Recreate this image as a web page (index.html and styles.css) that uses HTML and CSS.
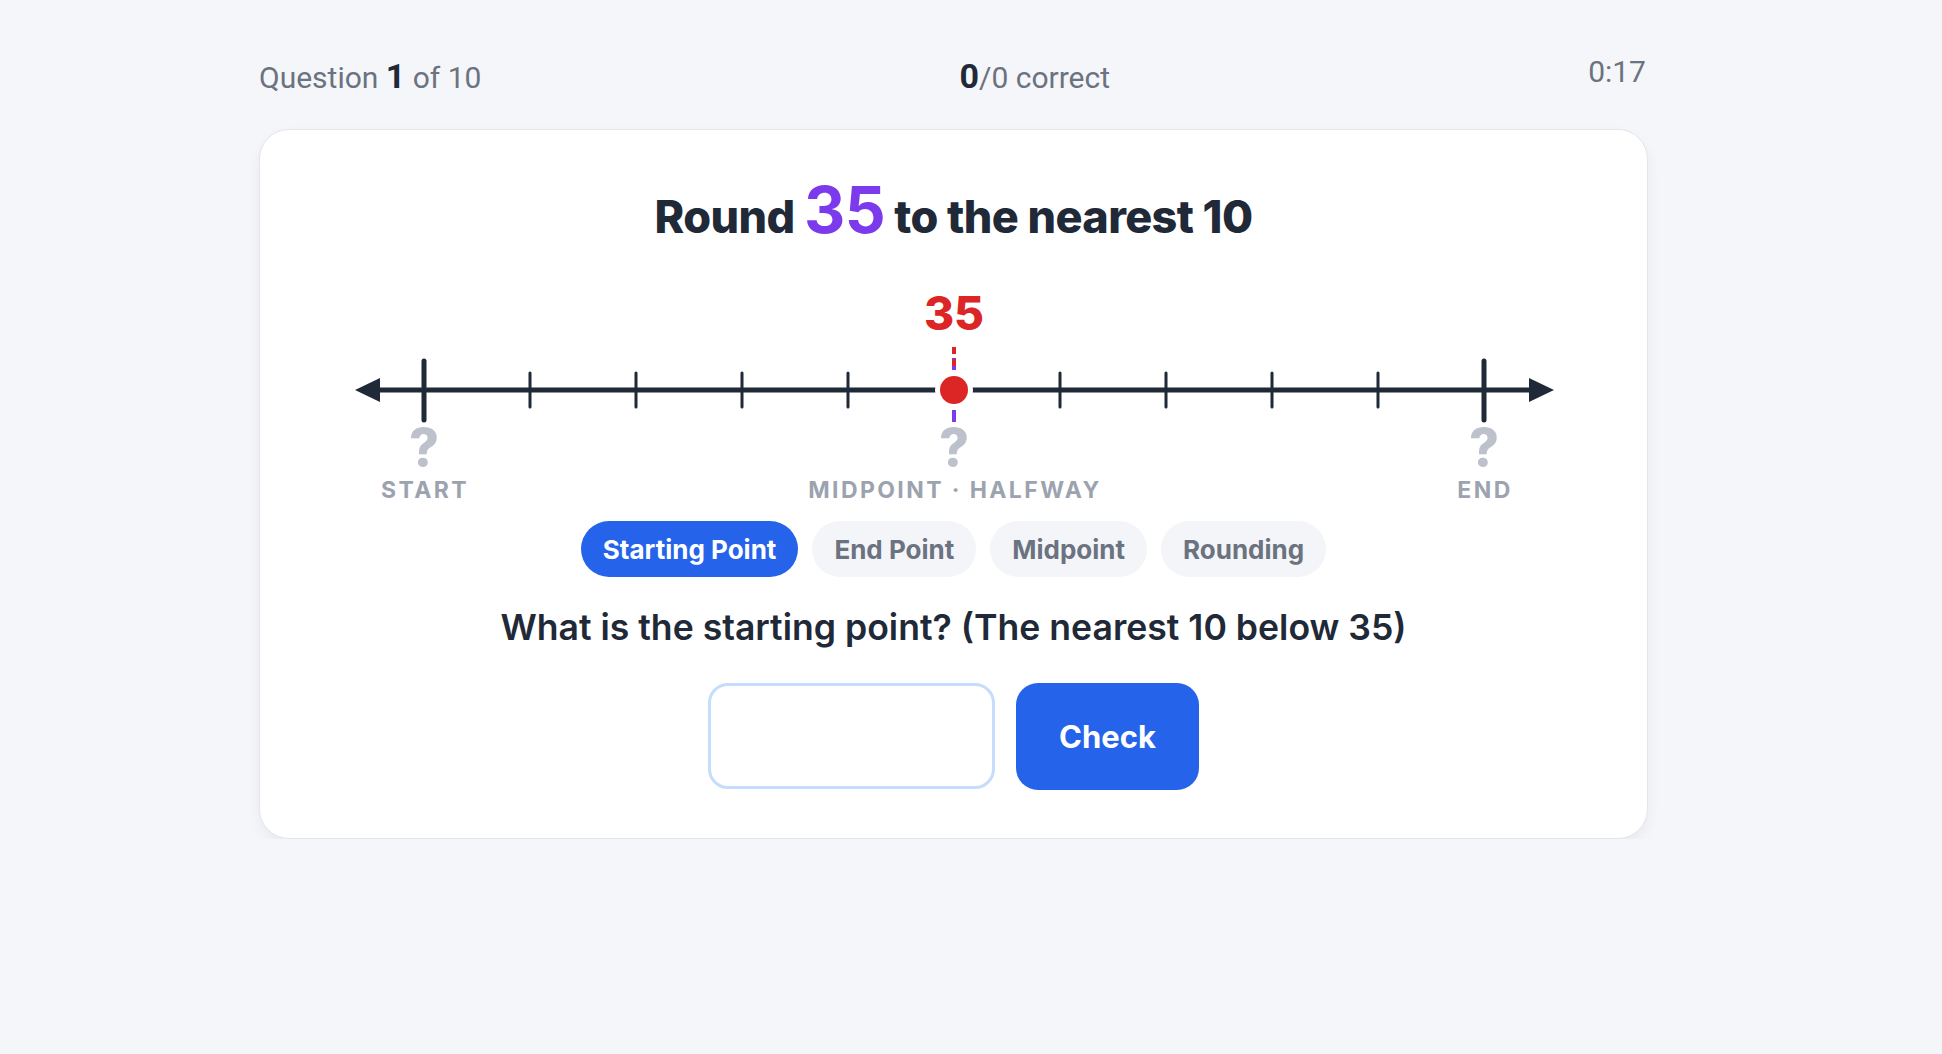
FILE: index.html
```html
<!DOCTYPE html>
<html lang="en">
<head>
<meta charset="utf-8">
<title>Rounding Practice</title>
<link rel="stylesheet" href="styles.css">
</head>
<body>
<main class="app">
  <header class="status">
    <div class="stat">Question <strong>1</strong> of 10</div>
    <div class="stat"><strong>0</strong>/0 correct</div>
    <div class="timer">0:17</div>
  </header>

  <section class="card">
    <h1 class="title">Round <span class="target">35</span> to the nearest 10</h1>

    <svg class="numberline" viewBox="0 0 1240 220" width="1240" height="220" aria-label="Number line">
      <!-- axis with arrows -->
      <line class="axis" x1="44" y1="100" x2="1196" y2="100"/>
      <polygon class="axis-head" points="21,100 46,88 46,112"/>
      <polygon class="axis-head" points="1220,100 1195,88 1195,112"/>

      <!-- end ticks -->
      <line class="tick-major" x1="90" y1="71" x2="90" y2="130"/>
      <line class="tick-major" x1="1150" y1="71" x2="1150" y2="130"/>

      <!-- unit ticks -->
      <line class="tick" x1="196" y1="83" x2="196" y2="117"/>
      <line class="tick" x1="302" y1="83" x2="302" y2="117"/>
      <line class="tick" x1="408" y1="83" x2="408" y2="117"/>
      <line class="tick" x1="514" y1="83" x2="514" y2="117"/>
      <line class="tick" x1="726" y1="83" x2="726" y2="117"/>
      <line class="tick" x1="832" y1="83" x2="832" y2="117"/>
      <line class="tick" x1="938" y1="83" x2="938" y2="117"/>
      <line class="tick" x1="1044" y1="83" x2="1044" y2="117"/>

      <!-- midpoint guide and value marker -->
      <line class="mid-guide" x1="620" y1="68" x2="620" y2="132"/>
      <line class="value-guide" x1="620" y1="57" x2="620" y2="90"/>
      <circle class="value-halo" cx="620" cy="100" r="19"/>
      <circle class="value-dot" cx="620" cy="100" r="14"/>
      <text class="value-label" x="620" y="40">35</text>

      <!-- unknown points -->
      <text class="unknown" x="90" y="176">?</text>
      <text class="unknown" x="620" y="176">?</text>
      <text class="unknown" x="1150" y="176">?</text>

      <text class="point-label" x="91" y="208">START</text>
      <text class="point-label" x="621" y="208">MIDPOINT · HALFWAY</text>
      <text class="point-label" x="1151" y="208">END</text>
    </svg>

    <nav class="steps">
      <button class="step is-active" type="button">Starting Point</button>
      <button class="step" type="button">End Point</button>
      <button class="step" type="button">Midpoint</button>
      <button class="step" type="button">Rounding</button>
    </nav>

    <p class="prompt">What is the starting point? (The nearest 10 below 35)</p>

    <form class="answer">
      <input class="answer-input" type="text" inputmode="numeric" aria-label="Answer">
      <button class="check" type="button">Check</button>
    </form>
  </section>
</main>
</body>
</html>
```

FILE: styles.css
```css
* {
  box-sizing: border-box;
}

html,
body {
  margin: 0;
  background: #f5f6fa;
}

body {
  padding: 56px 35px 0 0;
  font-family: Inter, "Noto Sans", sans-serif;
  color: #1f2937;
}

.app {
  width: 1389px;
  margin: 0 auto;
}

/* top status bar */
.status {
  display: flex;
  justify-content: space-between;
  align-items: flex-start;
  font-family: Roboto, "Liberation Sans", sans-serif;
  font-size: 30px;
  color: #6b7280;
  margin-bottom: 31px;
}

.stat {
  line-height: 40px;
}

.stat strong {
  font-size: 34px;
  font-weight: 700;
  color: #1f2937;
}

.timer {
  line-height: 32px;
  padding-right: 2px;
}

/* question card */
.card {
  background: #ffffff;
  border: 1px solid #e3e5ea;
  border-radius: 30px;
  box-shadow: 0 6px 14px rgba(15, 23, 42, 0.05);
  padding: 44px 48px 48px;
  display: flex;
  flex-direction: column;
  align-items: center;
}

.title {
  margin: 0;
  font-size: 45px;
  line-height: 72px;
  font-weight: 800;
  letter-spacing: -0.6px;
  color: #1f2937;
}

.target {
  font-size: 64px;
  line-height: 72px;
  font-weight: 700;
  color: #7c3aed;
  letter-spacing: -0.5px;
}

/* number line */
.numberline {
  display: block;
  margin-top: 37px;
  overflow: visible;
}

.axis {
  stroke: #1f2937;
  stroke-width: 5;
}

.axis-head {
  fill: #1f2937;
}

.tick-major {
  stroke: #1f2937;
  stroke-width: 5;
  stroke-linecap: round;
}

.tick {
  stroke: #1f2937;
  stroke-width: 3;
  stroke-linecap: round;
}

.mid-guide {
  stroke: #7c3aed;
  stroke-width: 4;
  stroke-dasharray: 12 14;
}

.value-guide {
  stroke: #dc2626;
  stroke-width: 4;
  stroke-dasharray: 7 5;
}

.value-halo {
  fill: #ffffff;
}

.value-dot {
  fill: #dc2626;
}

.value-label {
  font-family: Inter, sans-serif;
  font-size: 46px;
  font-weight: 800;
  fill: #dc2626;
  text-anchor: middle;
}

.unknown {
  font-family: Inter, sans-serif;
  font-size: 52px;
  font-weight: 800;
  fill: #bcc1cb;
  text-anchor: middle;
}

.point-label {
  font-family: Inter, sans-serif;
  font-size: 23px;
  font-weight: 700;
  letter-spacing: 2.4px;
  fill: #9ca3af;
  text-anchor: middle;
}

/* step tabs */
.steps {
  display: flex;
  gap: 14px;
  margin-top: 11px;
}

.step {
  height: 56px;
  padding: 0 22px;
  border: none;
  border-radius: 28px;
  background: #f4f5f8;
  color: #6b7280;
  font-family: Inter, sans-serif;
  font-size: 26px;
  font-weight: 700;
}

.step.is-active {
  background: #2563eb;
  color: #ffffff;
}

.prompt {
  margin: 29px 0 0;
  font-size: 35.6px;
  line-height: 44px;
  font-weight: 600;
  color: #1f2937;
}

/* answer row */
.answer {
  display: flex;
  gap: 21px;
  margin-top: 33px;
}

.answer-input {
  width: 287px;
  height: 106px;
  border: 3px solid #c6dcfb;
  border-radius: 20px;
  background: #ffffff;
  font-family: Inter, sans-serif;
  font-size: 36px;
  text-align: center;
  outline: none;
}

.check {
  width: 183px;
  height: 107px;
  border: none;
  border-radius: 22px;
  background: #2563eb;
  color: #ffffff;
  font-family: Inter, sans-serif;
  font-size: 31px;
  font-weight: 700;
}
```
